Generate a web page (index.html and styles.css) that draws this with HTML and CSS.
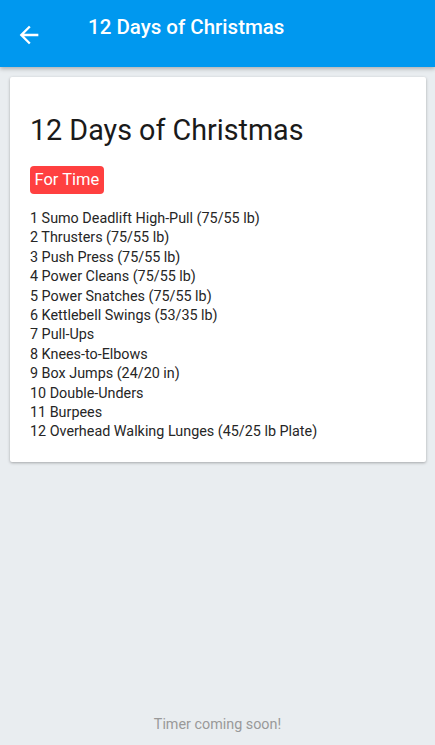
FILE: index.html
```html
<!DOCTYPE html>
<html>
<head>
<meta charset="utf-8">
<link rel="stylesheet" href="styles.css">
</head>
<body>
<div class="app">
  <header class="topbar">
    <button class="back" aria-label="Back">
      <svg width="28" height="28" viewBox="0 0 24 24"><path d="M20 11H7.83l5.59-5.59L12 4l-8 8 8 8 1.41-1.41L7.83 13H20v-2z" fill="#fff"/></svg>
    </button>
    <h1 class="topbar-title">12 Days of Christmas</h1>
  </header>
  <main class="content">
    <section class="card">
      <h2 class="card-title">12 Days of Christmas</h2>
      <span class="badge">For Time</span>
      <ul class="moves">
        <li>1 Sumo Deadlift High-Pull (75/55 lb)</li>
        <li>2 Thrusters (75/55 lb)</li>
        <li>3 Push Press (75/55 lb)</li>
        <li>4 Power Cleans (75/55 lb)</li>
        <li>5 Power Snatches (75/55 lb)</li>
        <li>6 Kettlebell Swings (53/35 lb)</li>
        <li>7 Pull-Ups</li>
        <li>8 Knees-to-Elbows</li>
        <li>9 Box Jumps (24/20 in)</li>
        <li>10 Double-Unders</li>
        <li>11 Burpees</li>
        <li>12 Overhead Walking Lunges (45/25 lb Plate)</li>
      </ul>
    </section>
  </main>
  <footer class="footer">Timer coming soon!</footer>
</div>
</body>
</html>
```

FILE: styles.css
```css
* { box-sizing: border-box; }
html, body { margin: 0; padding: 0; }
body {
  font-family: Roboto, "Liberation Sans", sans-serif;
  background: #e9edf0;
  width: 435px;
  height: 745px;
  overflow: hidden;
}
.app {
  display: flex;
  flex-direction: column;
  height: 745px;
}
.topbar {
  height: 67px;
  flex: none;
  background: #0098ef;
  display: flex;
  align-items: flex-start;
  padding: 15px 0 0 15px;
  box-shadow: 0 2px 4px rgba(0,0,0,0.25);
  position: relative;
  z-index: 1;
}
.back {
  border: 0;
  background: none;
  padding: 0;
  width: 28px;
  height: 28px;
  display: flex;
  margin-top: 6px;
}
.topbar-title {
  margin: 0 0 0 45px;
  color: #fff;
  font-size: 20.5px;
  font-weight: 500;
  line-height: 24px;
}
.content {
  flex: 1;
  padding: 10px 9px 0 10px;
}
.card {
  background: #fff;
  border-radius: 2px;
  box-shadow: 0 1px 3px rgba(0,0,0,0.3);
  padding: 36px 20px 20px 20px;
  display: flex;
  flex-direction: column;
  align-items: flex-start;
}
.card-title {
  margin: 0;
  font-size: 28.7px;
  font-weight: 400;
  color: #1a1a1a;
  line-height: 34px;
}
.badge {
  margin-top: 19px;
  background: #ff4040;
  color: #fff;
  font-size: 16.5px;
  line-height: 28px;
  padding: 0 4.5px;
  border-radius: 4px;
}
.moves {
  list-style: none;
  margin: 15px 0 0;
  padding: 0;
  font-size: 14.35px;
  line-height: 19.4px;
  color: #262626;
}
.footer {
  text-align: center;
  color: #999;
  font-size: 14.35px;
  padding-bottom: 12px;
}
```
